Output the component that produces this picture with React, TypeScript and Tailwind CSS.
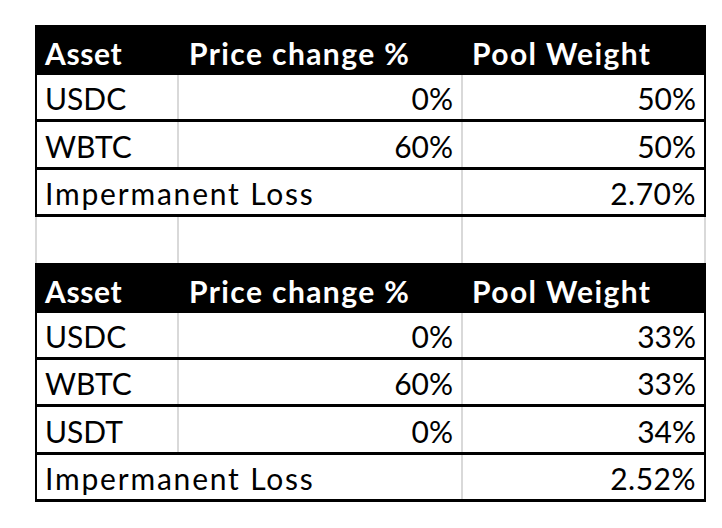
import React from "react";

type Row = { a: string; p?: string; w: string; total?: boolean };

const font = { fontFamily: "Lato, 'Noto Sans', sans-serif" };

function Header() {
  return (
    <div className="flex h-[50px] w-[671px] items-end bg-black pb-[7px] text-[30px] font-bold leading-none tracking-[1.4px] text-white">
      <div className="w-[144px] pl-[10px] tracking-[0.6px]">Asset</div>
      <div className="w-[284px] pl-[10px]">Price change %</div>
      <div className="flex-1 pl-[9px]">Pool Weight</div>
    </div>
  );
}

function BodyRow({ r, h }: { r: Row; h: string }) {
  if (r.total) {
    return (
      <div className={`flex w-[671px] border-x-2 border-b-[3px] border-black text-[30px] leading-none text-black ${h}`}>
        <div className="flex w-[426px] items-end border-r-2 border-[#d9d9d9] pb-[6px] pl-[8px] tracking-[1.8px]">{r.a}</div>
        <div className="flex flex-1 items-end justify-end pb-[6px] pr-[8px] tracking-[0.5px]">{r.w}</div>
      </div>
    );
  }
  return (
    <div className={`flex w-[671px] border-x-2 border-b-[3px] border-black text-[30px] leading-none text-black ${h}`}>
      <div className="flex w-[142px] items-end border-r-2 border-[#d9d9d9] pb-[6px] pl-[8px]">{r.a}</div>
      <div className="flex w-[284px] items-end justify-end border-r-2 border-[#d9d9d9] pb-[6px] pr-[8px]">{r.p}</div>
      <div className="flex flex-1 items-end justify-end pb-[6px] pr-[8px]">{r.w}</div>
    </div>
  );
}

export default function App() {
  const t1: Row[] = [
    { a: "USDC", p: "0%", w: "50%" },
    { a: "WBTC", p: "60%", w: "50%" },
    { a: "Impermanent Loss", w: "2.70%", total: true },
  ];
  const t2: Row[] = [
    { a: "USDC", p: "0%", w: "33%" },
    { a: "WBTC", p: "60%", w: "33%" },
    { a: "USDT", p: "0%", w: "34%" },
    { a: "Impermanent Loss", w: "2.52%", total: true },
  ];
  return (
    <div className="h-[528px] w-[722px] bg-white pl-[35px] pt-[25px]" style={font}>
      <Header />
      {t1.map((r, i) => (
        <BodyRow key={i} r={r} h={i === 1 ? "h-[48px]" : "h-[47px]"} />
      ))}
      <div className="flex h-[46px] w-[671px] border-x-2 border-[#d9d9d9]">
        <div className="w-[142px] border-r-2 border-[#d9d9d9]" />
        <div className="w-[284px] border-r-2 border-[#d9d9d9]" />
        <div className="flex-1" />
      </div>
      <Header />
      {t2.map((r, i) => (
        <BodyRow key={i} r={r} h={i === 2 ? "h-[48px]" : "h-[47px]"} />
      ))}
    </div>
  );
}
